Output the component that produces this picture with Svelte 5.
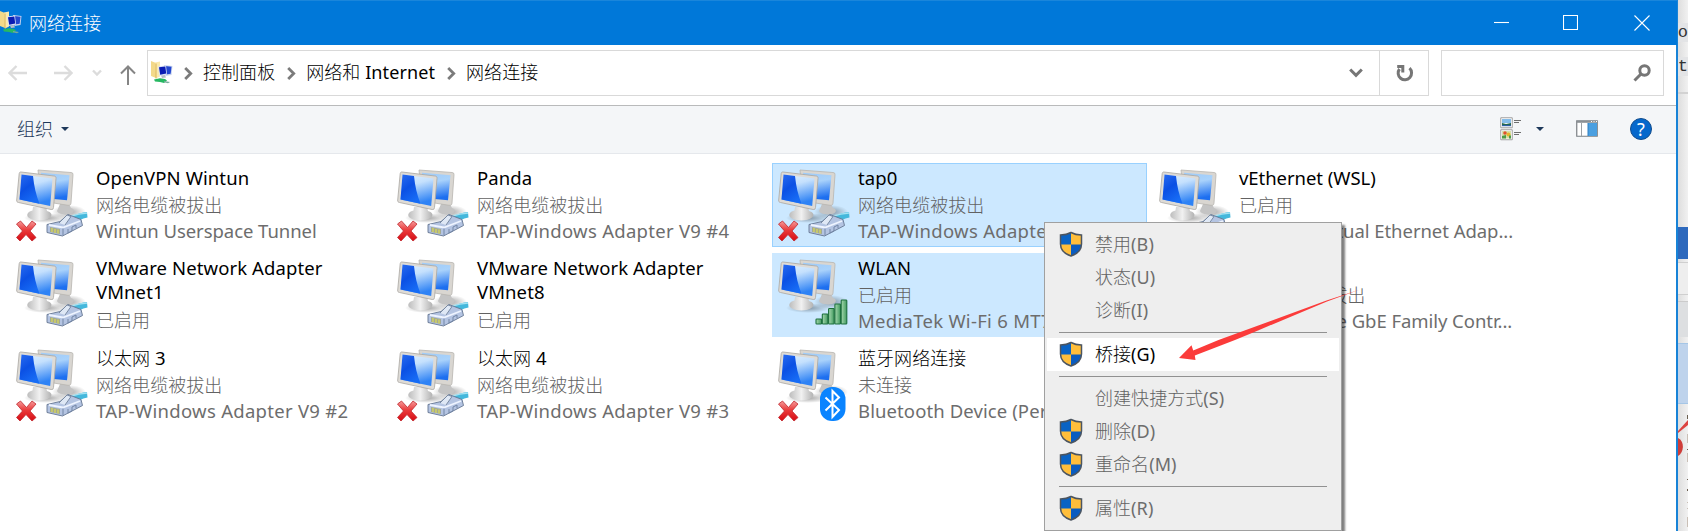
<script>
  // Splits a label into CJK and Latin runs so each script gets its own face and size.
  const runs = (s) =>
    (s.match(/[\u3400-\u9fff]+|[^\u3400-\u9fff]+/g) ?? []).map((t) => ({
      t,
      latin: !/[\u3400-\u9fff]/.test(t)
    }));

  const unplugged = '网络电缆被拔出';
  const connections = [
    { name: ['OpenVPN Wintun'], lines: [unplugged, 'Wintun Userspace Tunnel'], cable: true, off: true },
    { name: ['Panda'], lines: [unplugged, 'TAP-Windows Adapter V9 #4'], cable: true, off: true },
    { name: ['tap0'], lines: [unplugged, 'TAP-Windows Adapter V9'], cable: true, off: true, selected: true, focused: true },
    { name: ['vEthernet (WSL)'], lines: ['已启用', 'Hyper-V Virtual Ethernet Adap...'], cable: true },
    { name: ['VMware Network Adapter', 'VMnet1'], lines: ['已启用'], cable: true },
    { name: ['VMware Network Adapter', 'VMnet8'], lines: ['已启用'], cable: true },
    { name: ['WLAN'], lines: ['已启用', 'MediaTek Wi-Fi 6 MT7921'], wifi: true, selected: true },
    { name: ['以太网'], lines: [unplugged, 'Realtek PCIe GbE Family Contr...'], cable: true, off: true },
    { name: ['以太网 3'], lines: [unplugged, 'TAP-Windows Adapter V9 #2'], cable: true, off: true },
    { name: ['以太网 4'], lines: [unplugged, 'TAP-Windows Adapter V9 #3'], cable: true, off: true },
    { name: ['蓝牙网络连接'], lines: ['未连接', 'Bluetooth Device (Personal Area'], bluetooth: true, off: true }
  ];

  const menu = [
    { label: '禁用(B)', shield: true },
    { label: '状态(U)' },
    { label: '诊断(I)' },
    null,
    { label: '桥接(G)', shield: true, active: true },
    null,
    { label: '创建快捷方式(S)' },
    { label: '删除(D)', shield: true },
    { label: '重命名(M)', shield: true },
    null,
    { label: '属性(R)', shield: true }
  ];

  const crumbs = ['控制面板', '网络和 Internet', '网络连接'];
</script>

{#snippet text(s)}{#each runs(s) as r}<span class:latin={r.latin} class:cjk={!r.latin} class:wide={/^(TAP|Media)/.test(r.t)} class:tight={/^(Wintun|vEther|Hyper|Realtek)/.test(r.t)}>{r.t}</span>{/each}{/snippet}

{#snippet folder()}
  <svg class="folder" width="24" height="24" viewBox="0 0 24 24">
    <path d="M1 1l5 2v15l-5-2z" fill="#f3d98a" />
    <path d="M5 2.500l5-1v15l-4 2z" fill="#fbe9ac" />
    <path d="M6 3.500v15" stroke="#d9b457" />
    <path d="M14 5l8.500 1-1 9-6 1z" fill="#c9d4ee" />
    <path d="M15 6l6.500.7-.8 7-5 .8z" fill="#2347d0" />
    <path d="M8 6.500l8-1 1 9-7.500 1.500z" fill="#dbe3f5" />
    <path d="M9 7.300l6.300-.8.900 7-6 1.200z" fill="#0a1cb4" />
    <path d="M11 15.500l4-.6 1 2.600-4 .6z" fill="#b8bdc9" />
    <path d="M4 19.500l6-1.300 5 .8 2 1.500-3 2.500-4-1-5-.5z" fill="#27b862" />
    <path d="M14 21l6 1-2 1.200-4-1z" fill="#78a99a" />
  </svg>
{/snippet}

{#snippet shield()}
  <svg width="24" height="26" viewBox="0 0 24 26">
    <path d="M12 1.500C9 3.200 5 4 1.500 4v9.500C1.500 19 6 23 12 25z" fill="#0a63c4" />
    <path d="M12 1.500C15 3.200 19 4 22.500 4v9.500C22.500 19 18 23 12 25z" fill="#0a5cc0" />
    <path d="M12 1.500C15 3.200 19 4 22.500 4v9.500H12z" fill="#ffbe3b" />
    <path d="M1.500 13.500H12V25C6 23 1.500 19 1.500 13.500z" fill="#ffbe3b" />
    <path d="M12 1.500C9 3.200 5 4 1.500 4v9C1.500 19 6 23 12 25c6-2 10.500-6 10.500-12V4C19 4 15 3.200 12 1.500z" fill="none" stroke="#4c5560" stroke-width="1.500" />
  </svg>
{/snippet}

{#snippet computers(c)}
  <svg class="pc" width="74" height="76" viewBox="0 0 74 76">
    <ellipse cx="53" cy="44" rx="17" ry="7" fill="url(#shade)" />
    <ellipse cx="30" cy="50" rx="22" ry="5" fill="url(#shade)" />
    <path d="M44 36l8-2 3 6c4 1 4 5-1 6s-12 0-13-3z" fill="#c4c4c4" />
    <path d="M22 2l33 2.500a2 2 0 012 2.200L55 35c-.2 2-1 2.500-3 2.300L25 33z" fill="#d9d6d1" stroke="#b8b5b0" stroke-width=".8" />
    <path d="M25 4.800l28.500 2.400-2.500 25L27 30z" fill="url(#screen2)" />
    <path d="M17 39h13l1 4c4 1 6 4 3 6.500-4 4-17 4-21.500 0-3-3 0-6 4-7z" fill="url(#base)" />
    <path d="M5 4l33 4a2 2 0 012 2.500l-2.500 29a2 2 0 01-2.400 2L2.500 34.500c-1.500-.3-2-1-1.800-2.500l2.500-26.500c.1-1 .8-1.600 1.800-1.500z" fill="#dedbd6" stroke="#aaa7a2" stroke-width=".8" />
    <path d="M5.500 6.600l31 4L34.200 38 3.500 31.400z" fill="url(#screen1)" />
    <path d="M5.500 6.600l11.500 1.500c1 10 3 19 6.500 27.600L3.500 31.400z" fill="url(#dark)" />
    {#if c.cable}
      <path d="M51 50c7-2 9-4.500 20-6l.500 5.500c-6 1-9 4-15 6z" fill="#45b8dc" />
      <path d="M54 48.500c6-2 9-3 17-3.500" stroke="#a5e2f2" stroke-width="1.500" fill="none" />
      <path d="M31 56.500l13-3 8-7 13 5 1.500 6-20 10.500L31 64.500z" fill="#b4c4e2" stroke="#647692" stroke-width=".9" />
      <path d="M33 57l14 2.500L64 53" stroke="#eef4ff" stroke-width="1.800" fill="none" />
      <path d="M43 55l8-8 4 1.500L49 57" fill="#dfe8f5" stroke="#71829c" stroke-width=".9" />
      <path d="M47 60.500v7M52 61v4l4-2v-4l4-2v3" stroke="#7386a6" stroke-width="1" fill="none" />
      <path d="M34 59l10 2v5l-10-2z" fill="#a4aa91" />
      <path d="M36 60v4M39 61v4M42 61.500v4" stroke="#d8d85c" stroke-width="1.300" />
    {/if}
    {#if c.wifi}
      {#each [5, 10, 15.5, 20, 24] as h, i}
        <rect x={38 + i * 6.300} y={66 - h} width="5.600" height={h} rx=".8" fill="url(#bar)" stroke="#1d6f3c" stroke-width="1.100" />
      {/each}
    {/if}
    {#if c.bluetooth}
      <rect x="42" y="39" width="25.500" height="34" rx="12" ry="12" fill="#0a84ff" />
      <path d="M47.500 49.500L61 62 54.500 69V43l6.500 6.500L47.500 62.500" fill="none" stroke="#fff" stroke-width="2" />
    {/if}
    {#if c.off}
      <path d="M.5 56l4-3 6 6.500L16 53l4 3-6 7 6 6.500-4 3.500-6-6.500L4 73 .5 69.500 6.500 63z" fill="url(#cross)" stroke="#c0272d" stroke-width=".8" />
    {/if}
  </svg>
{/snippet}

<svg class="defs" width="0" height="0">
  <defs>
    <linearGradient id="screen1" x1="0" y1="0" x2=".3" y2="1"><stop offset="0" stop-color="#e3f2ff" /><stop offset=".4" stop-color="#c4e0fd" /><stop offset="1" stop-color="#2f83f5" /></linearGradient>
    <linearGradient id="dark" x1="0" y1="0" x2=".5" y2="1"><stop offset="0" stop-color="#2a6cf0" /><stop offset=".5" stop-color="#0b50e4" /><stop offset="1" stop-color="#176cf5" /></linearGradient>
    <linearGradient id="screen2" x1="0" y1="0" x2=".2" y2="1"><stop offset="0" stop-color="#9ecbf8" /><stop offset=".4" stop-color="#a9d2fb" /><stop offset="1" stop-color="#1d6ff0" /></linearGradient>
    <linearGradient id="base" x1="0" y1="0" x2="1" y2="0"><stop offset="0" stop-color="#bdbdbd" /><stop offset=".5" stop-color="#f1f1f1" /><stop offset="1" stop-color="#b2b2b2" /></linearGradient>
    <linearGradient id="bar" x1="0" y1="0" x2="1" y2="0"><stop offset="0" stop-color="#a6d9ae" /><stop offset="1" stop-color="#439a60" /></linearGradient>
    <linearGradient id="cross" x1="0" y1="0" x2="0" y2="1"><stop offset="0" stop-color="#f59a9a" /><stop offset=".45" stop-color="#ea3c3c" /><stop offset="1" stop-color="#d60a12" /></linearGradient>
    <radialGradient id="shade"><stop offset="0" stop-color="#000" stop-opacity=".35" /><stop offset="1" stop-color="#000" stop-opacity="0" /></radialGradient>
  </defs>
</svg>

<div class="desktop">
  <main class="window">
    <header class="titlebar">
      {@render folder()}
      <h1>{@render text('网络连接')}</h1>
      <div class="controls">
        <svg width="15" height="16"><path d="M0 7.500h15" /></svg>
        <svg width="15" height="16"><path d="M.5.500h14v14H.500z" /></svg>
        <svg width="16" height="16"><path d="M.5.500l15 15M15.500.500l-15 15" /></svg>
      </div>
    </header>

    <nav class="navbar">
      <div class="arrows">
        <svg width="19" height="16" class="dim"><path d="M19 8H1.500M8.500 1L1.500 8l7 7" /></svg>
        <svg width="19" height="16" class="dim"><path d="M0 8h17.500M10.500 1l7 7-7 7" /></svg>
        <svg width="10" height="8" class="dim"><path d="M1 1.500l4 4 4-4" /></svg>
        <svg width="16" height="20" class="up"><path d="M8 20V1.500M1 8.500l7-7 7 7" /></svg>
      </div>
      <div class="address">
        {@render folder()}
        {#each crumbs as c}
          <svg class="chev" width="9" height="13"><path d="M1.200 1l5.500 5.500-5.500 5.500" /></svg>
          <span class="crumb">{@render text(c)}</span>
        {/each}
        <svg class="drop" width="14" height="10"><path d="M1.200 1.500l5.800 5.800 5.800-5.800" /></svg>
        <div class="refresh">
          <svg width="18" height="18" viewBox="0 0 18 18"><path d="M13.500 3.200A6.700 6.700 0 113.500 4M1.200 1.500h5.600v6" /></svg>
        </div>
      </div>
      <div class="search">
        <svg width="18" height="18" viewBox="0 0 18 18"><circle cx="11.500" cy="6.500" r="4.700" /><path d="M8 10l-6.500 6.500" /></svg>
      </div>
    </nav>

    <div class="toolbar">
      <span class="organize">{@render text('组织')}</span>
      <i class="caret"></i>
      <div class="tools">
        <svg width="22" height="24" viewBox="0 0 22 24">
          <path d="M.750.750h11.500v10H.750zM.750 12.750h11.500v10H.750z" fill="#fff" stroke="#a0a0a0" />
          <path d="M2 2h9v4H2z" fill="#85bdea" /><path d="M2 6l4 1 5-1v2H2z" fill="#236652" /><path d="M2 8h9v1.200H2z" fill="#2f5fa5" />
          <path d="M2 14h9v7.500H2z" fill="#d5e0a8" /><circle cx="5" cy="16" r="1.800" fill="#e0522e" /><circle cx="8.500" cy="17.500" r="2" fill="#e5b62c" /><path d="M2 19l4-1v3.500H2zM9 18.500h2v3H9z" fill="#4d9a45" />
          <path d="M14 3.500h7M14 5.500h5M14 15.500h7M14 17.500h5" stroke="#6e6e6e" />
        </svg>
        <i class="caret"></i>
        <svg class="pane" width="22" height="17" viewBox="0 0 22 17">
          <path d="M.750.750h20.500v15.500H.750z" fill="#fff" stroke="#7a7f84" stroke-width="1.200" />
          <path d="M1 1h20v1.800H1z" fill="#8b9094" /><path d="M15 1.500h1M17.500 1.500h1M20 1.500h1" stroke="#fff" />
          <path d="M5.500 3v13" stroke="#9aa0a5" /><path d="M12 3h9v13h-9z" fill="#4a9fe0" /><path d="M12 3v13" stroke="#2e7fc0" />
        </svg>
        <span class="help">?</span>
      </div>
    </div>

    <section class="grid">
      {#each connections as c}
        <article class:selected={c.selected} class:focused={c.focused}>
          {@render computers(c)}
          <div class="info">
            <h2 class:double={c.name.length > 1}>
              {#each c.name as n}<span class="row">{@render text(n)}</span>{/each}
            </h2>
            {#each c.lines as l}<p>{@render text(l)}</p>{/each}
          </div>
        </article>
      {/each}
    </section>
  </main>

  <aside class="behind">
    <div class="code c1">o</div>
    <div class="code c2">et</div>
    <div class="line"></div>
    <div class="bluebar"></div>
    <div class="field"></div>
    <div class="strip"></div>
    <div class="pick"></div>
    <svg width="10" height="116">
      <path d="M0 16L10 5v5L0 18z" fill="#dc4340" /><path d="M0 23c7 3 6 15 0 18z" fill="#cf3d39" />
      <path d="M9 0h1v4H9zM9 34h1v1H9zM9 64h1v1H9zM9 74h1v2H9z" fill="#6b5f50" />
      <path d="M9 19h1v9H9zM9 38h1v9H9zM9 87h1v1H9zM9 93h1v1H9zM9 102h1v10H9z" fill="#c9bfb6" />
    </svg>
  </aside>

  <div class="menu">
    {#each menu as m}
      {#if m}
        <div class="item" class:active={m.active}>
          <span class="slot">{#if m.shield}{@render shield()}{/if}</span>
          <span class="label">{@render text(m.label)}</span>
        </div>
      {:else}
        <hr />
      {/if}
    {/each}
  </div>

  <svg class="pointer" width="184" height="74" viewBox="1178 288 184 74">
    <path d="M1179 358l12.500-12.700 1.700 5.200L1218.500 340 1326.500 300.500 1360 289.500 1327 301.500 1258 330.500 1235 340 1194.800 355.500 1195.500 360z" fill="#fb3b3a" />
  </svg>
</div>

<style>
  :global(body) { margin: 0; overflow: hidden; }
  .desktop {
    position: relative; display: flex; width: 1688px; height: 531px; overflow: hidden;
    font-family: "Noto Sans", "Noto Sans CJK SC", sans-serif; font-size: 18px; color: #000; background: #fff;
  }
  .defs { position: absolute; }
  svg { display: block; flex: none; }
  h1, h2, p { margin: 0; font-weight: 400; font-size: inherit; }
  .latin { font-size: 18.5px; white-space: pre; letter-spacing: .1px; }
  .latin.wide { letter-spacing: .28px; }
  .latin.tight { letter-spacing: -.05px; }
  .cjk { font-family: "Noto Sans CJK SC", sans-serif; font-weight: 300; letter-spacing: .05px; }

  .window { width: 1678px; border-right: 2px solid #1883d7; height: 531px; display: flex; flex-direction: column; background: #fff; box-sizing: border-box; flex: none; }
  .titlebar { height: 45px; box-sizing: border-box; border-top: 1px solid #1a86db; background: #0078d9; color: #fff; display: flex; align-items: center; margin-right: -1px; flex: none; }
  .titlebar .folder { margin-left: -1px; margin-top: -2px; }
  h1 { margin-left: 6px; margin-top: -1px; line-height: 24px; }
  .controls { margin-left: auto; display: flex; gap: 54px; margin-right: 27px; align-items: center; }
  .controls svg { fill: none; stroke: #fff; stroke-width: 1.1; }
  .controls svg:nth-child(2) { margin-right: 2px; }

  .navbar { height: 60px; box-sizing: border-box; padding: 5px 12px 9px 0; display: flex; flex: none; }
  .arrows { width: 147px; display: flex; align-items: center; flex: none; }
  .arrows svg { fill: none; stroke: #858585; stroke-width: 2; margin-left: 8px; }
  .arrows svg.dim { stroke: #dcdcdc; stroke-width: 2.4; }
  .arrows svg:nth-child(2) { margin-left: 27px; }
  .arrows svg:nth-child(3) { margin-left: 19px; }
  .arrows svg.up { margin-left: 18px; margin-top: 3px; }
  .address { width: 1282px; box-sizing: border-box; border: 1px solid #d9d9d9; display: flex; align-items: center; flex: none; }
  .address .folder { margin-left: 2px; margin-top: -3px; }
  .chev { margin: 0 10px; fill: none; stroke: #7b7b7b; stroke-width: 2.8; }
  .crumb { margin-top: -4px; }
  .crumb + .chev { margin-left: 12px; }
  .crumb .latin { font-size: 18px; }
  .crumb:last-of-type { margin-right: auto; }
  .drop { fill: none; stroke: #767676; stroke-width: 3; margin-right: 16px; }
  .refresh { width: 48px; height: 44px; border-left: 1px solid #d9d9d9; display: flex; align-items: center; justify-content: center; }
  .refresh svg { margin-left: 2px; margin-top: 2px; }
  .refresh svg, .search svg { fill: none; stroke: #767676; stroke-width: 3; }
  .search { margin-left: 12px; width: 223px; box-sizing: border-box; border: 1px solid #d9d9d9; display: flex; align-items: center; justify-content: flex-end; padding-right: 12px; }

  .toolbar { height: 49px; box-sizing: border-box; border-top: 1px solid #b9babb; border-bottom: 1px solid #e5e8ec; background: #f4f6f8; display: flex; align-items: center; padding: 0 24px 2px 17px; color: #1e395b; flex: none; }
  .organize { margin-top: -2px; }
  .caret { width: 0; height: 0; border: 4px solid transparent; border-top-color: #1e395b; border-bottom: 0; margin-left: 8px; }
  .tools { margin-left: auto; display: flex; align-items: center; }
  .tools .caret { margin-left: 14px; margin-right: 32px; }
  .help { margin-left: 32px; width: 20px; height: 20px; border: 1px solid #114c8c; border-radius: 50%; background: #0668cc; color: #fff; font-size: 18px; line-height: 20px; text-align: center; }

  .grid { display: grid; grid-template-columns: repeat(4, 375px); grid-auto-rows: 84px; gap: 6px; padding: 9px 0 0 10px; }
  article { display: flex; box-sizing: border-box; border: 1px solid transparent; min-width: 0; }
  .selected { background: #cce8ff; border-color: #cce8ff; }
  .focused { border-color: #99d1ff; }
  .pc { margin: 4px 0 0 5px; }
  .info { margin-left: 6px; white-space: nowrap; }
  h2, p { line-height: 27px; height: 27px; }
  p { color: #6d6d6d; }
  p .cjk, .item:not(.active) .cjk { color: #626262; }
  p + p { line-height: 25px; height: 25px; }
  h2 .row { display: block; }
  h2.double { line-height: 24px; height: 50px; padding-top: 2px; }

  .behind { width: 10px; flex: none; background: linear-gradient(90deg, #dedede, #f1f1f1); display: flex; flex-direction: column; overflow: hidden; }
  .behind > * { flex: none; }
  .code { font: 17px/19px "Liberation Mono", monospace; color: #333; background: #e3e4e6; height: 19px; white-space: nowrap; display: flex; justify-content: flex-end; }
  .c1 { margin-top: 23px; }
  .c2 { margin-top: 15px; }
  .line { margin-top: 16px; height: 2px; background: #d2d2d2; }
  .bluebar { margin-top: 133px; height: 32px; background: #2d69bd; }
  .field { margin-top: 3px; height: 31px; border: solid #cfcfcf; border-width: 1px 0; background: #eee; }
  .strip { margin-top: 6px; height: 35px; border-top: 1px solid #cbcbcb; background: #dddfe1; }
  .pick { margin-top: 6px; height: 59px; background: #bed3ec; border: solid #a5c6e6; border-width: 1px 0; }
  .behind svg { margin-top: 11px; }

  .menu { position: absolute; left: 1044px; top: 222px; width: 298px; height: 309px; box-sizing: border-box; border: 1px solid #a0a0a0; background: #eee; padding: 5px 2px; box-shadow: 3px 3px 2px rgba(0, 0, 0, .5); }
  .item { height: 33px; display: flex; align-items: center; color: #6d6d6d; padding-left: 12px; }
  .item.active { background: #fff; color: #000; }
  .slot { width: 36px; flex: none; margin-top: -1px; }
  .label { margin-top: -4px; }
  .label .latin { font-size: 18px; }
  hr { margin: 5px 12px; border: 0; height: 1px; background: #919191; }
  .pointer { position: absolute; left: 1178px; top: 288px; }
</style>
